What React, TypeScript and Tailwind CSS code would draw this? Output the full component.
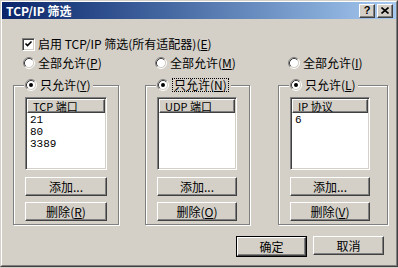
import React from 'react';

const Radio: React.FC<{ checked?: boolean }> = ({ checked }) => (
  <svg width="12" height="12" viewBox="0 0 12 12" className="shrink-0">
    <circle cx="6" cy="6" r="4.5" fill="#fff" />
    <path d="M2.11 9.89A5.5 5.5 0 0 1 9.89 2.11" fill="none" stroke="#808080" />
    <path d="M9.89 2.11A5.5 5.5 0 0 1 2.11 9.89" fill="none" stroke="#fff" />
    <path d="M2.82 9.18A4.5 4.5 0 0 1 9.18 2.82" fill="none" stroke="#404040" />
    <path d="M9.18 2.82A4.5 4.5 0 0 1 2.82 9.18" fill="none" stroke="#d4d0c8" />
    {checked && <circle cx="6" cy="6" r="2" fill="#000" />}
  </svg>
);

const Check: React.FC = () => (
  <div className="w-[13px] h-[13px] shrink-0 bg-white border border-t-[#808080] border-l-[#808080] border-r-white border-b-white shadow-[inset_1px_1px_0_#404040,inset_-1px_-1px_0_#d4d0c8]">
    <svg width="11" height="11" viewBox="0 0 11 11">
      <path d="M2.5 4.5l2 2 4-4" fill="none" stroke="#000" strokeWidth="1.6" />
    </svg>
  </div>
);

// letter after the accelerator, underlined like the old Windows dialogs
const Mn: React.FC<{ k: string }> = ({ k }) => (
  <span>
    (<span className="underline underline-offset-1">{k}</span>)
  </span>
);

const Btn: React.FC<{ children: React.ReactNode; className?: string }> = ({ children, className }) => (
  <div
    className={`flex items-center justify-center h-[19px] border border-t-white border-l-white border-r-[#404040] border-b-[#404040] shadow-[inset_-1px_-1px_0_#808080] ${className ?? ''}`}
  >
    {children}
  </div>
);

const TitleBtn: React.FC<{ children: React.ReactNode; className?: string }> = ({ children, className }) => (
  <div
    className={`w-[16px] h-[14px] flex items-center justify-center bg-[#d4d0c8] border border-t-white border-l-white border-r-[#404040] border-b-[#404040] shadow-[inset_-1px_-1px_0_#808080] ${className ?? ''}`}
  >
    {children}
  </div>
);

interface ColumnProps {
  width: string;
  margin: string;
  listWidth: string;
  allKey: string;
  onlyKey: string;
  header: string;
  items: string[];
  removeKey: string;
  focused?: boolean;
}

const Column: React.FC<ColumnProps> = ({ width, margin, listWidth, allKey, onlyKey, header, items, removeKey, focused }) => (
  <div className={`flex flex-col ${width} ${margin}`}>
    <div className="flex items-center h-[14px] pl-[10px] gap-[3px]">
      <Radio />
      <span>
        全部允许<Mn k={allKey} />
      </span>
    </div>

    <fieldset className="mt-[8px] border border-[#808080] shadow-[1px_1px_0_#fff,inset_1px_1px_0_#fff] px-[11px] pb-[3px]">
      <legend className="-ml-[1px] pl-[1px] pr-[2px] bg-[#d4d0c8]">
        <div className="flex items-center h-[14px] gap-[3px]">
          <Radio checked />
          <span className={focused ? 'border border-dotted border-black px-[1px] leading-[12px]' : ''}>
            只允许<Mn k={onlyKey} />
          </span>
        </div>
      </legend>

      <div
        className={`mt-[5px] h-[73px] ${listWidth} bg-white border border-t-[#808080] border-l-[#808080] border-r-white border-b-white shadow-[inset_1px_1px_0_#404040,inset_-1px_-1px_0_#d4d0c8] p-[1px]`}
      >
        <div className="h-[14px] flex items-center pl-[5px] bg-[#d4d0c8] border border-t-white border-l-white border-r-[#404040] border-b-[#404040] shadow-[inset_-1px_-1px_0_#808080] text-[11px] leading-[11px]">
          {header}
        </div>
        <div className="pl-[3px] pt-[1px] text-[11px] leading-[12px] font-['Liberation_Mono',monospace]">
          {items.map(i => (
            <div key={i}>{i}</div>
          ))}
        </div>
      </div>

      <Btn className={`mt-[7px] ${listWidth}`}>添加...</Btn>
      <Btn className={`mt-[6px] ${listWidth}`}>
        <span>
          删除<Mn k={removeKey} />
        </span>
      </Btn>
    </fieldset>
  </div>
);

export default function App() {
  return (
    <div className="w-[398px] h-[268px] bg-[#d4d0c8] text-black text-[12px] leading-[14px] font-['Noto_Sans_CJK_SC','Liberation_Sans',sans-serif]">
      <div className="h-[267px] flex flex-col border border-t-[#d4d0c8] border-l-[#d4d0c8] border-r-[#404040] border-b-[#404040]">
        <div className="flex-1 flex flex-col border border-t-white border-l-white border-r-[#808080] border-b-[#808080]">
          {/* title bar */}
          <div className="h-[17px] flex items-center pl-[4px] pr-[3px] bg-linear-to-r from-[#0a246a] to-[#a6caf0]">
            <span className="flex-1 text-white font-bold">TCP/IP 筛选</span>
            <TitleBtn>
              <span className="font-['Liberation_Sans',sans-serif] font-bold text-[11px] leading-none">?</span>
            </TitleBtn>
            <TitleBtn className="ml-[2px]">
              <svg width="8" height="7" viewBox="0 0 8 7">
                <path d="M0.5 0.5l7 6M7.5 0.5l-7 6" stroke="#000" strokeWidth="1.6" />
              </svg>
            </TitleBtn>
          </div>

          <div className="mt-[18px] ml-[20px] h-[14px] flex items-center gap-[3px]">
            <Check />
            <span>
              启用 TCP/IP 筛选(所有适配器)<Mn k="E" />
            </span>
          </div>

          <div className="mt-[5px] ml-[11px] flex">
            <Column
              width="w-[106px]"
              margin=""
              listWidth="w-[82px]"
              allKey="P"
              onlyKey="Y"
              header="TCP 端口"
              items={['21', '80', '3389']}
              removeKey="R"
            />
            <Column
              width="w-[105px]"
              margin="ml-[26px]"
              listWidth="w-[80px]"
              allKey="M"
              onlyKey="N"
              header="UDP 端口"
              items={[]}
              removeKey="O"
              focused
            />
            <Column
              width="w-[110px]"
              margin="ml-[28px]"
              listWidth="w-[80px]"
              allKey="I"
              onlyKey="L"
              header="IP 协议"
              items={['6']}
              removeKey="V"
            />
          </div>

          <div className="mt-[11px] flex justify-end pr-[12px] gap-[6px]">
            <div className="border border-black">
              <Btn className="w-[69px] h-[17px]">确定</Btn>
            </div>
            <Btn className="w-[71px]">取消</Btn>
          </div>
        </div>
      </div>
    </div>
  );
}
